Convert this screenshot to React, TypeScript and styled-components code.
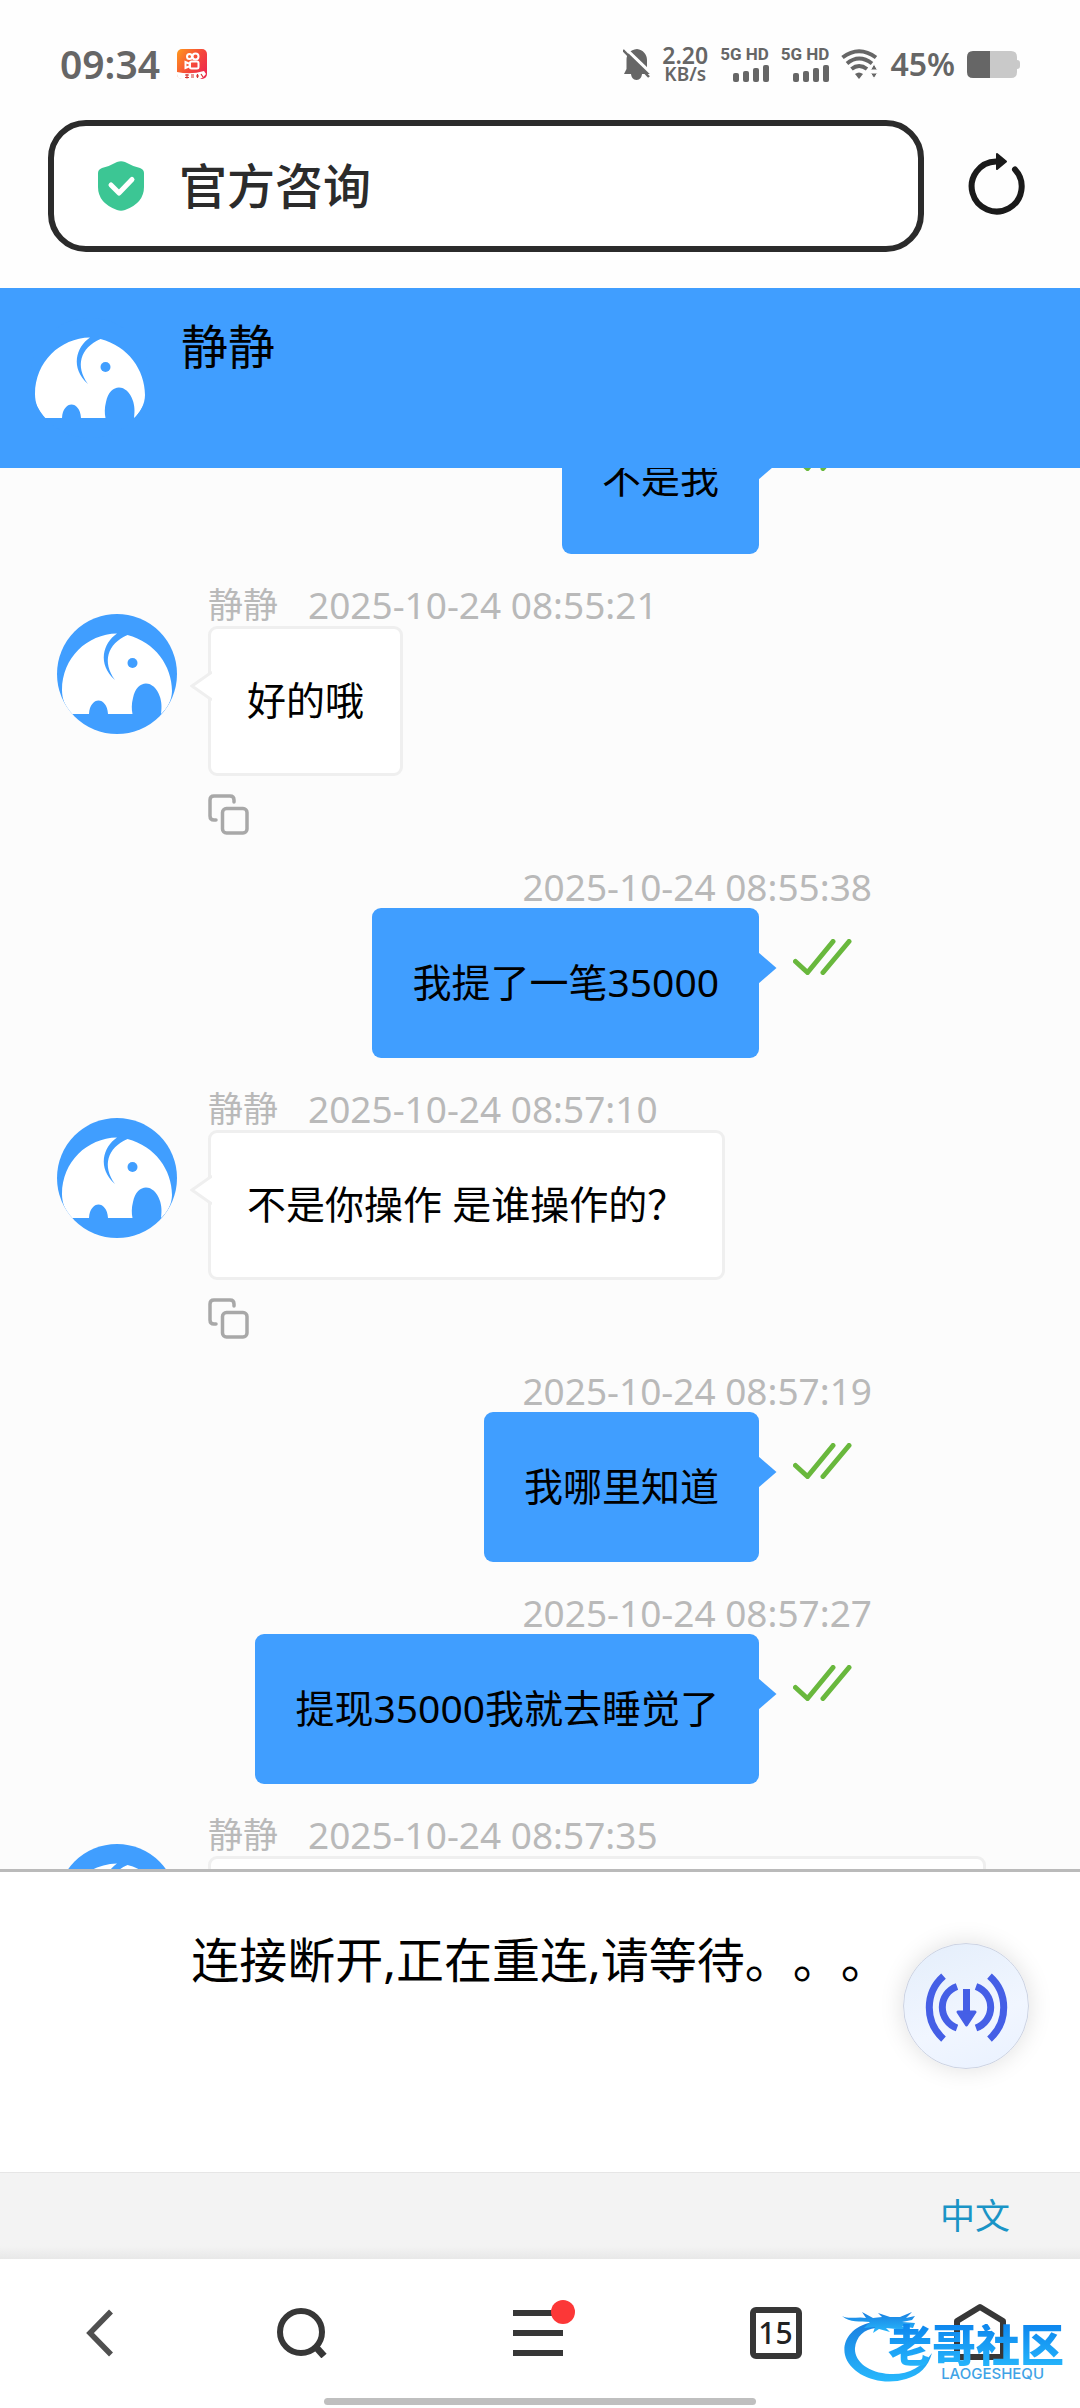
import React, { useLayoutEffect, useRef } from "react";
import styled, { createGlobalStyle } from "styled-components";

const BLUE = "#409eff";
const GREY = "#666666";
const INK = "#373737";
const FONT = '"Noto Sans", "Noto Sans CJK SC", sans-serif';

const GlobalStyle = createGlobalStyle`
  *, *::before, *::after { box-sizing: border-box; }
  body { margin: 0; background: #fff; font-family: ${FONT}; color: #000; }
  button { border: 0; padding: 0; background: none; font-family: inherit; cursor: pointer; }
  svg { display: block; flex: none; }
`;

const Page = styled.div`
  display: flex;
  flex-direction: column;
  height: 100vh;
  background: #fefefe;
  overflow: hidden;
`;

/* ---------- status bar ---------- */

const StatusBar = styled.div`
  display: flex;
  align-items: center;
  justify-content: space-between;
  height: 120px;
  padding: 8px 60px 0;
  flex: none;
  color: ${GREY};
`;

const StatusGroup = styled.div<{ $gap: number }>`
  display: flex;
  align-items: center;
  gap: ${(p) => p.$gap}px;
  height: 40px;
`;

const Clock = styled.span`
  font-size: 39px;
  line-height: 40px;
  font-weight: 600;
`;

const Speed = styled.span`
  display: flex;
  flex-direction: column;
  align-items: center;
  font-weight: 600;
`;

const SpeedValue = styled.span`
  font-size: 23px;
  line-height: 20px;
`;

const SpeedUnit = styled.span`
  font-size: 19px;
  line-height: 18px;
`;

const Signal = styled.span`
  display: flex;
  flex-direction: column;
  align-items: flex-end;
  gap: 4px;
  font-size: 17px;
  line-height: 14px;
  font-weight: 700;
  font-family: Roboto, sans-serif;
`;

const Percent = styled.span`
  font-size: 32px;
  line-height: 40px;
  font-weight: 600;
`;

/* ---------- address bar ---------- */

const AddressRow = styled.div`
  display: flex;
  align-items: center;
  gap: 42px;
  padding: 0 54px 36px 48px;
  flex: none;
`;

const AddressBox = styled.label`
  display: flex;
  flex: 1;
  align-items: center;
  gap: 35px;
  height: 132px;
  padding: 0 44px;
  border: 6px solid #2b2b2b;
  border-radius: 38px;
  background: #fff;
`;

const AddressInput = styled.input`
  flex: 1;
  min-width: 0;
  border: 0;
  padding: 0;
  outline: 0;
  background: none;
  font-family: inherit;
  font-size: 48px;
  line-height: 64px;
  font-weight: 500;
  color: #2b2b2b;
`;

/* ---------- chat ---------- */

const ChatHeader = styled.header`
  display: flex;
  align-items: flex-start;
  gap: 31px;
  height: 180px;
  padding: 30px;
  flex: none;
  background: ${BLUE};
`;

const AgentName = styled.h1`
  margin: 0;
  font-size: 47px;
  line-height: 56px;
  font-weight: 400;
`;

const Log = styled.main`
  flex: 1;
  min-height: 0;
  overflow-y: auto;
  scrollbar-width: none;
  background: #fcfcfc;
`;

const Received = styled.article`
  display: flex;
  align-items: flex-start;
  gap: 31px;
  padding: 0 57px 30px;
`;

const Sent = styled.article`
  display: flex;
  flex-direction: column;
  align-items: flex-end;
  padding: 0 208px 30px;
`;

const Avatar = styled.span`
  display: block;
  flex: none;
  border-radius: 50%;
  overflow: hidden;
  background: ${BLUE};
`;

const AvatarSlot = styled.div`
  padding-top: 30px;
`;

const Column = styled.div`
  display: flex;
  flex-direction: column;
  align-items: flex-start;
`;

const Meta = styled.div`
  display: flex;
  gap: 30px;
  height: 42px;
  line-height: 42px;
  color: #b9b9b9;
  white-space: nowrap;
`;

const Sender = styled.span`
  font-size: 35px;
`;

const Time = styled.time`
  font-size: 37px;
`;

const SentRow = styled.div`
  display: flex;
  align-items: flex-start;
  gap: 34px;
  padding-right: 20px;
`;

const Tick = styled.span`
  padding-top: 31px;
`;

const Bubble = styled.div<{ $mine?: boolean; $wide?: boolean }>`
  position: relative;
  width: ${(p) => (p.$wide ? "778px" : "auto")};
  height: 150px;
  padding: 0 ${(p) => (p.$mine ? 40 : 36)}px;
  border: ${(p) => (p.$mine ? "0" : "3px solid #efefef")};
  border-radius: 9px;
  background: ${(p) => (p.$mine ? BLUE : "#fff")};
  font-size: 39px;
  line-height: ${(p) => (p.$mine ? 148 : 142)}px;
  white-space: nowrap;
`;

const Pointer = styled.svg<{ $mine?: boolean }>`
  position: absolute;
  top: ${(p) => (p.$mine ? 44 : 41)}px;
  ${(p) => (p.$mine ? "right: -18px;" : "left: -21px;")}
`;

const CopyButton = styled.button`
  height: 43px;
  margin-top: 17px;
`;

/* ---------- composer ---------- */

const Composer = styled.section`
  position: relative;
  height: 303px;
  padding-top: 60px;
  flex: none;
  border-top: 3px solid #bababa;
  background: #fff;
`;

const Notice = styled.p`
  margin: 0;
  text-align: center;
  font-size: 48px;
  line-height: 56px;
  text-spacing-trim: space-all;
`;

const FloatButton = styled.button`
  position: absolute;
  top: 71px;
  right: 51px;
  width: 126px;
  height: 126px;
  border: 1px solid #cdd3e2;
  border-radius: 50%;
  background: linear-gradient(160deg, #e4eefb, #f1f6ff 60%, #e9f1ff);
  box-shadow: 0 0 24px rgba(0, 0, 0, 0.13);
`;

const LanguageBar = styled.div`
  display: flex;
  justify-content: flex-end;
  align-items: center;
  height: 87px;
  padding-right: 70px;
  flex: none;
  border-top: 1px solid #e6e6e6;
  background: linear-gradient(#f3f3f3 85%, #e8e8e8);
`;

const LanguageLink = styled.a`
  font-size: 35px;
  line-height: 44px;
  color: #1a94c6;
  text-decoration: none;
`;

/* ---------- browser toolbar ---------- */

const Toolbar = styled.nav`
  position: relative;
  display: grid;
  grid-template-columns: 199fr 206fr 266fr 209fr 200fr;
  height: 139px;
  flex: none;
  background: #fff;
`;

const ToolButton = styled.button`
  display: flex;
  align-items: center;
  justify-content: center;
  padding-top: 9px;
`;

const TabCount = styled.span`
  display: flex;
  align-items: center;
  justify-content: center;
  width: 52px;
  height: 52px;
  border: 6px solid ${INK};
  border-radius: 6px;
  font-size: 30px;
  line-height: 40px;
  font-weight: 500;
  color: #222;
`;

const Gesture = styled.div`
  height: 10px;
  flex: none;
  background: #fff;

  &::before {
    content: "";
    display: block;
    width: 40%;
    height: 7px;
    margin: 0 auto;
    border-radius: 4px;
    background: #bfbfbf;
  }
`;

const Watermark = styled.div`
  position: absolute;
  top: 52px;
  right: 16px;
  display: flex;
  width: 222px;
  pointer-events: none;
`;

const WatermarkText = styled.div`
  position: absolute;
  right: 0;
  top: 13px;
  display: flex;
  flex-direction: column;
  align-items: flex-end;
`;

const WatermarkName = styled.span`
  font-size: 44px;
  line-height: 42px;
  font-weight: 900;
  white-space: nowrap;
  background: linear-gradient(#0d86ee, #25b4fb);
  background-clip: text;
  color: transparent;
`;

const WatermarkLatin = styled.span`
  margin-right: 20px;
  font-family: Inter, sans-serif;
  font-size: 15px;
  line-height: 16px;
  font-weight: 500;
  color: #3fa3e6;
`;

/* ---------- drawings ---------- */

const Elephant = () => (
  <Avatar>
    <svg width="120" height="120" viewBox="0 0 120 120" aria-hidden="true">
      <path
        fill="#fff"
        d="M14.5 100C8 92 5 85 5 76C5 44 30 20 60 19.500C46 29 40 50 58 66C45 48 50 30 70.500 21C98 28 115 52 115 77C115 86 110 95 104 100C105 92 104.500 88 103 83C97 65 80 65 76 84C74.500 90 74.500 95 75.500 100H51C50 82 33 82 32 100Z"
      />
      <circle cx="75.500" cy="49" r="5" fill={BLUE} />
    </svg>
  </Avatar>
);

const AppBadge = () => (
  <svg width="30" height="30" viewBox="0 0 30 30" aria-hidden="true">
    <defs>
      <linearGradient id="badge" x1="0" y1="0" x2="1" y2="0.700">
        <stop offset="0" stopColor="#ff9a1c" />
        <stop offset="0.600" stopColor="#f5483a" />
        <stop offset="1" stopColor="#ee2b4e" />
      </linearGradient>
    </defs>
    <rect width="30" height="30" rx="5" fill="url(#badge)" />
    <path d="M0 23Q14 26 27 22L29 25Q25 30 22 30H5Q0 30 0 25Z" fill="#fff" />
    <g fill="none" stroke="#fff" strokeWidth="2">
      <circle cx="12.500" cy="7.500" r="2.500" />
      <circle cx="18.500" cy="7.500" r="3" />
      <rect x="13" y="12.500" width="8.500" height="7" rx="1.500" />
      <path d="M13 15L8.500 13V19L13 17" />
    </g>
    <path d="M8 26H12M8 28.500H12M10 25V29.500M14 26H17M14 28H17M19 27H22M20.500 25V29M24 25L26 28" stroke="#d6342f" strokeWidth="1.200" />
  </svg>
);

const BellOff = () => (
  <svg width="27" height="31" viewBox="0 0 27 31" aria-hidden="true">
    <path d="M14 0C20 1 24 5 24 11V19L27 24V25H1L3.500 20V11C3.500 5 7 1 14 0Z" fill={GREY} />
    <path d="M8 24H19C19 28 17 31 13.500 31S8 28 8 24Z" fill={GREY} />
    <path d="M2 -1L29 25" stroke="#fff" strokeWidth="3" />
    <path d="M0 1L26 28" stroke={GREY} strokeWidth="2.500" />
  </svg>
);

const Bars = () => (
  <svg width="36" height="17" viewBox="0 0 36 17" fill={GREY} aria-hidden="true">
    <rect x="0" y="8" width="6" height="9" rx="2" />
    <rect x="10" y="6" width="6" height="11" rx="2" />
    <rect x="20" y="3" width="6" height="14" rx="2" />
    <rect x="30" y="0" width="6" height="17" rx="2" />
  </svg>
);

const Wifi = () => (
  <svg width="37" height="30" viewBox="0 0 37 30" fill="none" stroke={GREY} strokeWidth="4" aria-hidden="true">
    <path d="M1.500 8.500Q18 -4 35 8.500" />
    <path d="M6 14.500Q18 4.500 31 14.500" />
    <path d="M10.500 20Q18 14 26 20" />
    <path d="M14 25Q18 22 22 25L18 30Z" fill={GREY} stroke="none" />
    <path d="M33 15L36.500 21H29.500ZM33 29.500L36.500 24H29.500Z" fill={GREY} stroke="#fefefe" strokeWidth="1" />
  </svg>
);

const Battery = () => (
  <svg width="53" height="27" viewBox="0 0 53 27" aria-hidden="true">
    <path d="M23 0H44Q50 0 50 6V9Q53 9 53 12V15Q53 18 50 18V21Q50 27 44 27H23Z" fill="#c9c9c9" />
    <path d="M23 0H6Q0 0 0 6V21Q0 27 6 27H23Z" fill={GREY} />
  </svg>
);

const Shield = () => (
  <svg width="46" height="50" viewBox="0 0 46 50" aria-hidden="true">
    <path d="M19 1Q23 -0.500 27 1Q34 5 42 7Q46 8.500 46 12V26Q46 42 27 49Q23 50.500 19 49Q0 42 0 26V12Q0 8.500 4 7Q12 5 19 1Z" fill="#3cc694" />
    <path d="M13 24L21 32L34 18.500" fill="none" stroke="#fff" strokeWidth="5" strokeLinecap="round" strokeLinejoin="round" />
  </svg>
);

const Reload = () => (
  <svg width="60" height="68" viewBox="0 3 60 68" aria-hidden="true">
    <path d="M49 20.500A25 25 0 1 1 30 12.500" fill="none" stroke="#1a1a1a" strokeWidth="6" strokeLinecap="round" />
    <path d="M31 5L40 12.500L31 20Z" fill="#1a1a1a" stroke="#1a1a1a" strokeWidth="2" strokeLinejoin="round" />
  </svg>
);

const CopyIcon = () => (
  <svg width="41" height="41" viewBox="0 0 41 41" fill="none" stroke="#a8a8a8" strokeWidth="3.500" strokeLinecap="round" aria-hidden="true">
    <path d="M8 26H6Q2 26 2 22V6Q2 2 6 2H22Q26 2 26 6V8" />
    <rect x="14.500" y="14.500" width="24.500" height="24.500" rx="4" />
  </svg>
);

const ReadTick = () => (
  <svg width="59" height="36" viewBox="0 0 59 36" fill="none" stroke="#69b83d" strokeWidth="5" strokeLinecap="round" strokeLinejoin="round" aria-hidden="true">
    <path d="M2.500 22.500L14.500 33.500L40 2.500" />
    <path d="M30 33.500L56 2.500" />
  </svg>
);

const ReceiveIcon = () => (
  <svg width="124" height="124" viewBox="1 1 124 124" fill="none" stroke="#455fe6" strokeWidth="7" aria-hidden="true">
    <path d="M40.500 33A42 42 0 0 0 40.500 96" />
    <path d="M86.500 33A42 42 0 0 1 86.500 96" />
    <path d="M54 43.500A22 22 0 0 0 54 85" />
    <path d="M73 43.500A22 22 0 0 1 73 85" />
    <path d="M63.500 46V70" />
    <path d="M55 69H72L63.500 82Z" fill="#455fe6" strokeWidth="3" strokeLinejoin="round" />
  </svg>
);

const BackIcon = () => (
  <svg width="28" height="48" viewBox="0 0 28 48" aria-hidden="true">
    <path d="M25 2.500L4 24L25 45.500" fill="none" stroke="#505050" strokeWidth="5.500" />
  </svg>
);

const SearchIcon = () => (
  <svg width="50" height="50" viewBox="0 0 50 50" fill="none" stroke={INK} strokeWidth="6" aria-hidden="true">
    <circle cx="24" cy="24" r="21" />
    <path d="M38 38L47 48" strokeWidth="7" />
  </svg>
);

const MenuIcon = () => (
  <svg width="74" height="68" viewBox="0 -4 74 68" aria-hidden="true">
    <path d="M12 10H62M12 30H62M12 50H62" stroke={INK} strokeWidth="6" />
    <circle cx="62" cy="9" r="12" fill="#fc3737" />
  </svg>
);

const HomeIcon = () => (
  <svg width="52" height="60" viewBox="0 0 52 60" fill="none" stroke={INK} strokeWidth="6" strokeLinejoin="round" aria-hidden="true">
    <path d="M3 18L26 4L49 18V54H3Z" />
  </svg>
);

const Dragon = () => (
  <svg width="92" height="74" viewBox="0 0 92 74" aria-hidden="true">
    <defs>
      <linearGradient id="dragon" x1="0" y1="0" x2="0" y2="1">
        <stop offset="0" stopColor="#1a7fe0" />
        <stop offset="1" stopColor="#27b8fd" />
      </linearGradient>
    </defs>
    <g fill="url(#dragon)">
      <path d="M30 11C8 16 0 31 3 44C8 64 38 76 64 68C78 64 86 56 90 42C80 56 66 64 48 63C26 62 12 50 13 37C14 26 22 18 34 17Z" />
      <path d="M0 5C8 9 16 5 24 7L20 1L31 7L40 6L36 2L48 6H58L70 1L64 7L73 5L70 9L60 11L73 12L71 17L60 15L66 20L54 18L44 17L48 21L37 18L31 22L33 16L22 17L28 11C18 10 8 12 0 5Z" />
    </g>
  </svg>
);

/* ---------- messages ---------- */

type Message = { from: "agent" | "me"; time?: string; text?: string };

const messages: Message[] = [
  { from: "me", text: "不是我" },
  { from: "agent", time: "2025-10-24 08:55:21", text: "好的哦" },
  { from: "me", time: "2025-10-24 08:55:38", text: "我提了一笔35000" },
  { from: "agent", time: "2025-10-24 08:57:10", text: "不是你操作 是谁操作的？" },
  { from: "me", time: "2025-10-24 08:57:19", text: "我哪里知道" },
  { from: "me", time: "2025-10-24 08:57:27", text: "提现35000我就去睡觉了" },
  { from: "agent", time: "2025-10-24 08:57:35" },
];

const SentMessage = ({ time, text }: Message) => (
  <Sent>
    <Meta>
      <Time>{time}</Time>
    </Meta>
    <SentRow>
      <Bubble $mine>
        {text}
        <Pointer $mine width="19" height="32" viewBox="0 0 19 32" aria-hidden="true">
          <path d="M0 0L18.500 16L0 32Z" fill={BLUE} />
        </Pointer>
      </Bubble>
      <Tick>
        <ReadTick />
      </Tick>
    </SentRow>
  </Sent>
);

const ReceivedMessage = ({ time, text }: Message) => (
  <Received>
    <AvatarSlot>
      <Elephant />
    </AvatarSlot>
    <Column>
      <Meta>
        <Sender>静静</Sender>
        <Time>{time}</Time>
      </Meta>
      <Bubble $wide={!text}>
        {text}
        <Pointer width="22" height="32" viewBox="0 0 22 32" aria-hidden="true">
          <path d="M22 2L2 16L22 30" fill="#fff" stroke="#efefef" strokeWidth="3" />
        </Pointer>
      </Bubble>
      <CopyButton aria-label="复制">
        <CopyIcon />
      </CopyButton>
    </Column>
  </Received>
);

export default function App() {
  const log = useRef<HTMLElement>(null);

  useLayoutEffect(() => {
    if (log.current) log.current.scrollTop = 106;
  }, []);

  return (
    <Page lang="zh-CN">
      <GlobalStyle />
      <StatusBar>
        <StatusGroup $gap={17}>
          <Clock>09:34</Clock>
          <AppBadge />
        </StatusGroup>
        <StatusGroup $gap={12}>
          <BellOff />
          <Speed>
            <SpeedValue>2.20</SpeedValue>
            <SpeedUnit>KB/s</SpeedUnit>
          </Speed>
          <Signal>
            5G HD
            <Bars />
          </Signal>
          <Signal>
            5G HD
            <Bars />
          </Signal>
          <Wifi />
          <Percent>45%</Percent>
          <Battery />
        </StatusGroup>
      </StatusBar>

      <AddressRow>
        <AddressBox>
          <Shield />
          <AddressInput aria-label="地址栏" defaultValue="官方咨询" />
        </AddressBox>
        <button aria-label="刷新">
          <Reload />
        </button>
      </AddressRow>

      <ChatHeader>
        <Elephant />
        <AgentName>静静</AgentName>
      </ChatHeader>

      <Log ref={log}>
        {messages.map((m, i) =>
          m.from === "me" ? <SentMessage key={i} {...m} /> : <ReceivedMessage key={i} {...m} />
        )}
      </Log>

      <Composer>
        <Notice>连接断开,正在重连,请等待。。。</Notice>
        <FloatButton aria-label="接收">
          <ReceiveIcon />
        </FloatButton>
      </Composer>
      <LanguageBar>
        <LanguageLink href="#language">中文</LanguageLink>
      </LanguageBar>

      <Toolbar>
        <ToolButton aria-label="后退">
          <BackIcon />
        </ToolButton>
        <ToolButton aria-label="搜索">
          <SearchIcon />
        </ToolButton>
        <ToolButton aria-label="菜单">
          <MenuIcon />
        </ToolButton>
        <ToolButton aria-label="标签页">
          <TabCount>15</TabCount>
        </ToolButton>
        <ToolButton aria-label="主页">
          <HomeIcon />
        </ToolButton>
        <Watermark>
          <Dragon />
          <WatermarkText>
            <WatermarkName>老哥社区</WatermarkName>
            <WatermarkLatin>LAOGESHEQU</WatermarkLatin>
          </WatermarkText>
        </Watermark>
      </Toolbar>
      <Gesture />
    </Page>
  );
}
